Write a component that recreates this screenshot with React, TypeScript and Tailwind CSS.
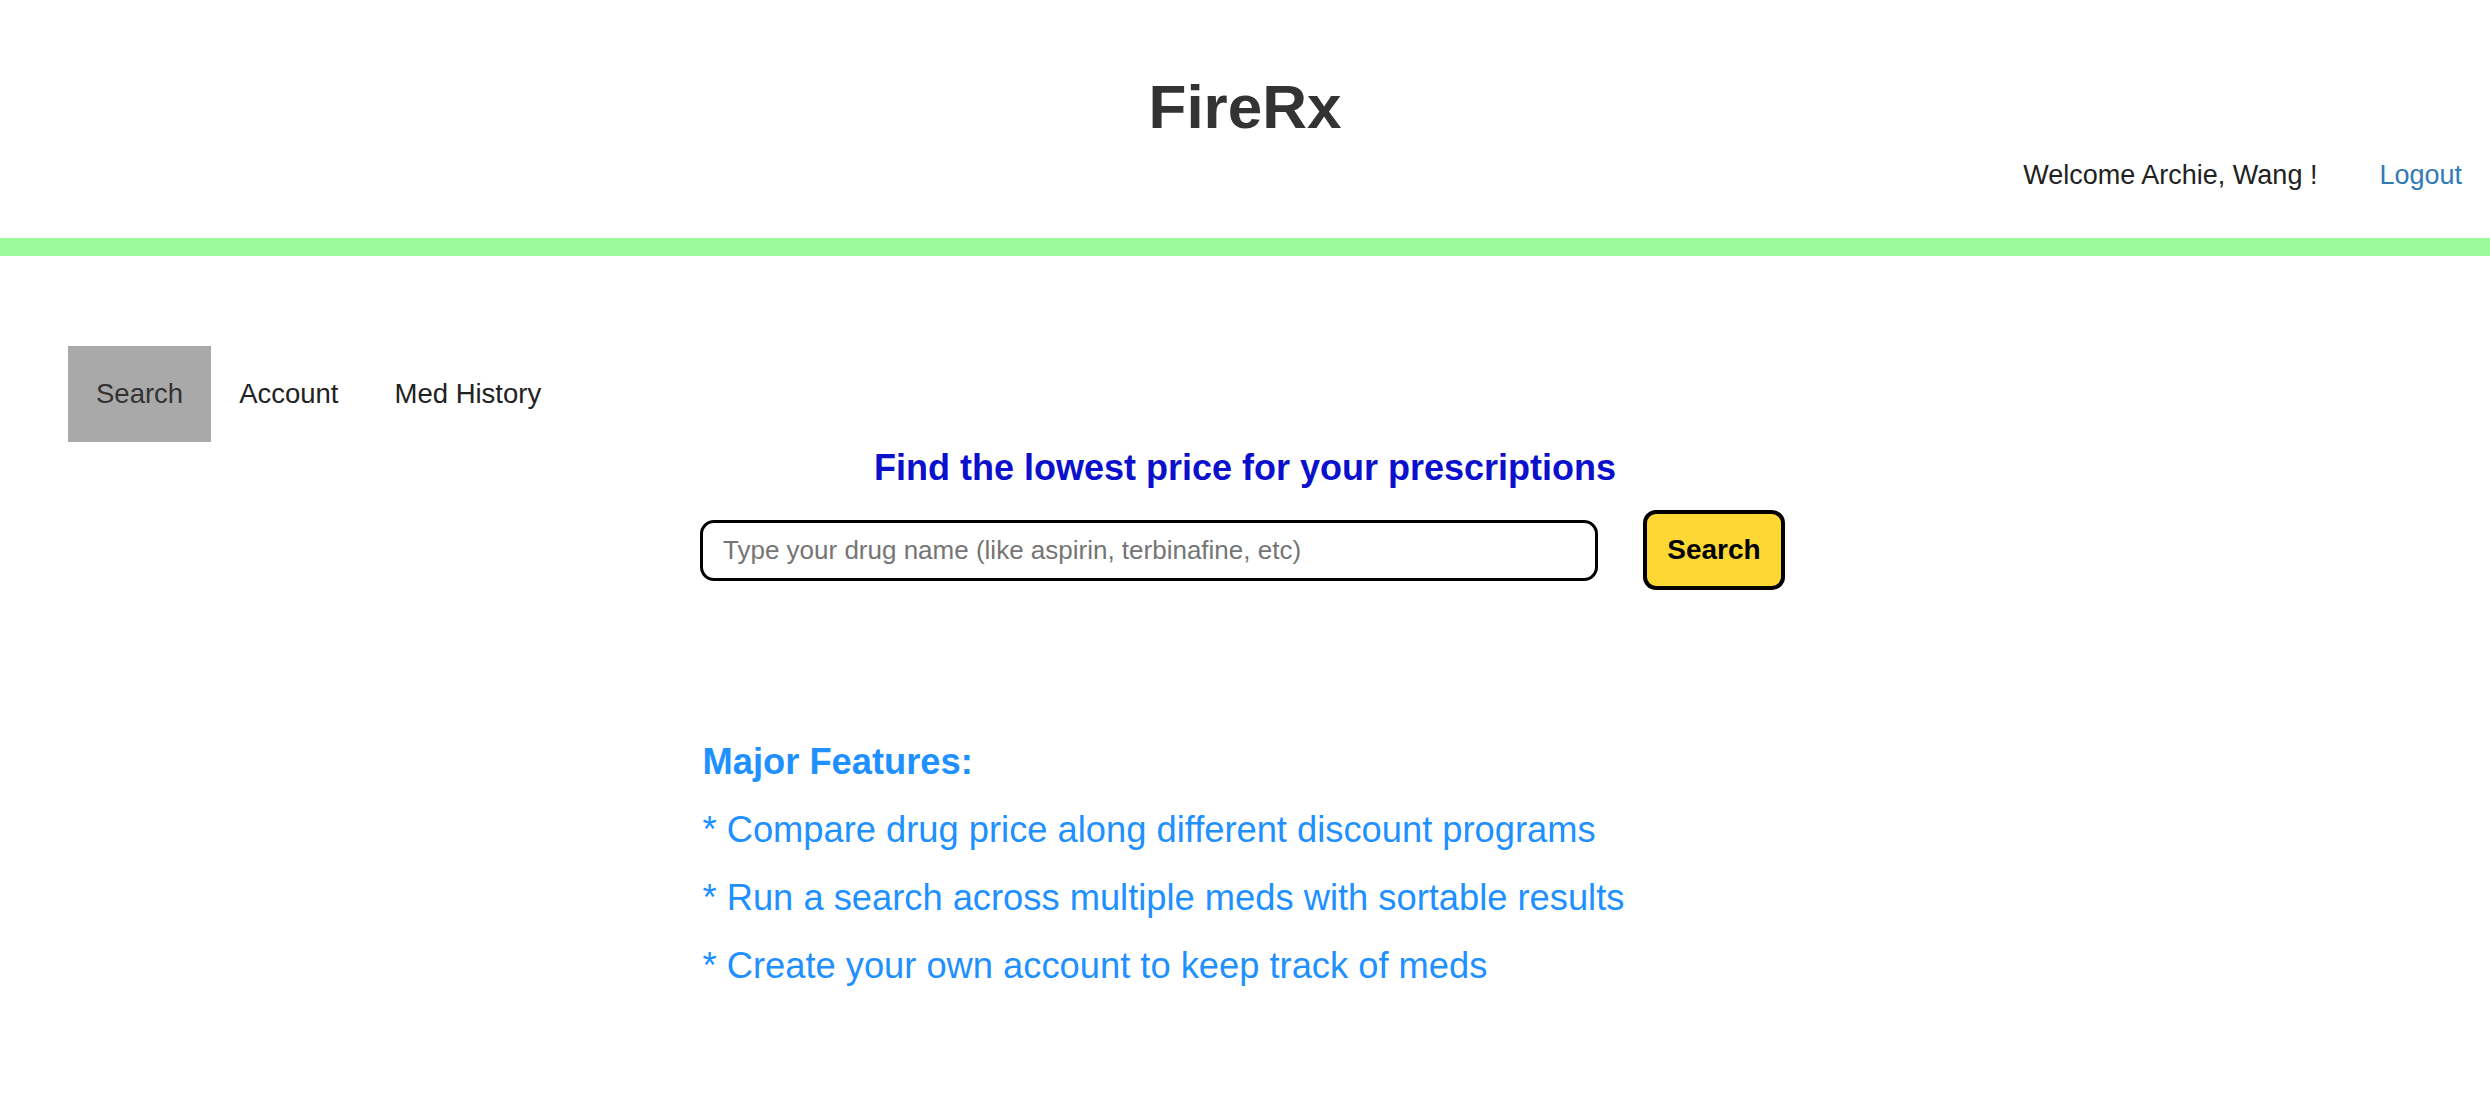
import React from "react";

const tabs = ["Search", "Account", "Med History"];

const features = [
  "* Compare drug price along different discount programs",
  "* Run a search across multiple meds with sortable results",
  "* Create your own account to keep track of meds",
];

export default function App() {
  return (
    <div className="min-h-screen bg-white font-['Liberation_Sans',Arial,sans-serif]">
      <header className="pt-[76px]">
        <h1 className="text-center text-[62px] leading-none font-bold text-[#333]">FireRx</h1>
        <div className="mt-[24px] flex items-center justify-end gap-[62px] pr-[28px] text-[27px] leading-none">
          <span className="text-[#222]">Welcome Archie, Wang !</span>
          <a href="#" className="text-[#337ab7]">
            Logout
          </a>
        </div>
        <div className="mt-[49px] h-[18px] bg-[#9cf99c]" />
      </header>

      <nav className="mt-[90px] flex pl-[68px]">
        {tabs.map((tab, i) => (
          <a
            key={tab}
            href="#"
            className={
              i === 0
                ? "flex h-[96px] items-center bg-[#a9a9a9] px-[28px] text-[27.5px] text-[#333]"
                : "flex h-[96px] items-center px-[28px] text-[27.5px] text-[#222]"
            }
          >
            {tab}
          </a>
        ))}
      </nav>

      <main>
        <h2 className="mt-[8px] text-center text-[36px] leading-none font-bold text-[#0a10cc]">
          Find the lowest price for your prescriptions
        </h2>

        <div className="mt-[24px] flex items-center justify-center gap-[45px] pr-[5px]">
          <input
            type="text"
            placeholder="Type your drug name (like aspirin, terbinafine, etc)"
            className="h-[61px] w-[898px] rounded-[14px] border-[3px] border-black px-[20px] text-[26px] text-[#222] outline-none placeholder:text-[#757575]"
          />
          <button className="h-[80px] w-[142px] rounded-[13px] border-[4px] border-black bg-[#fdd835] text-[28px] font-bold text-black">
            Search
          </button>
        </div>

        <section className="mx-auto mt-[154px] flex w-[1085px] flex-col gap-[31.7px] text-[36.3px] leading-none text-[#1e90ff]">
          <h3 className="font-bold">Major Features:</h3>
          {features.map((f) => (
            <p key={f}>{f}</p>
          ))}
        </section>
      </main>
    </div>
  );
}
